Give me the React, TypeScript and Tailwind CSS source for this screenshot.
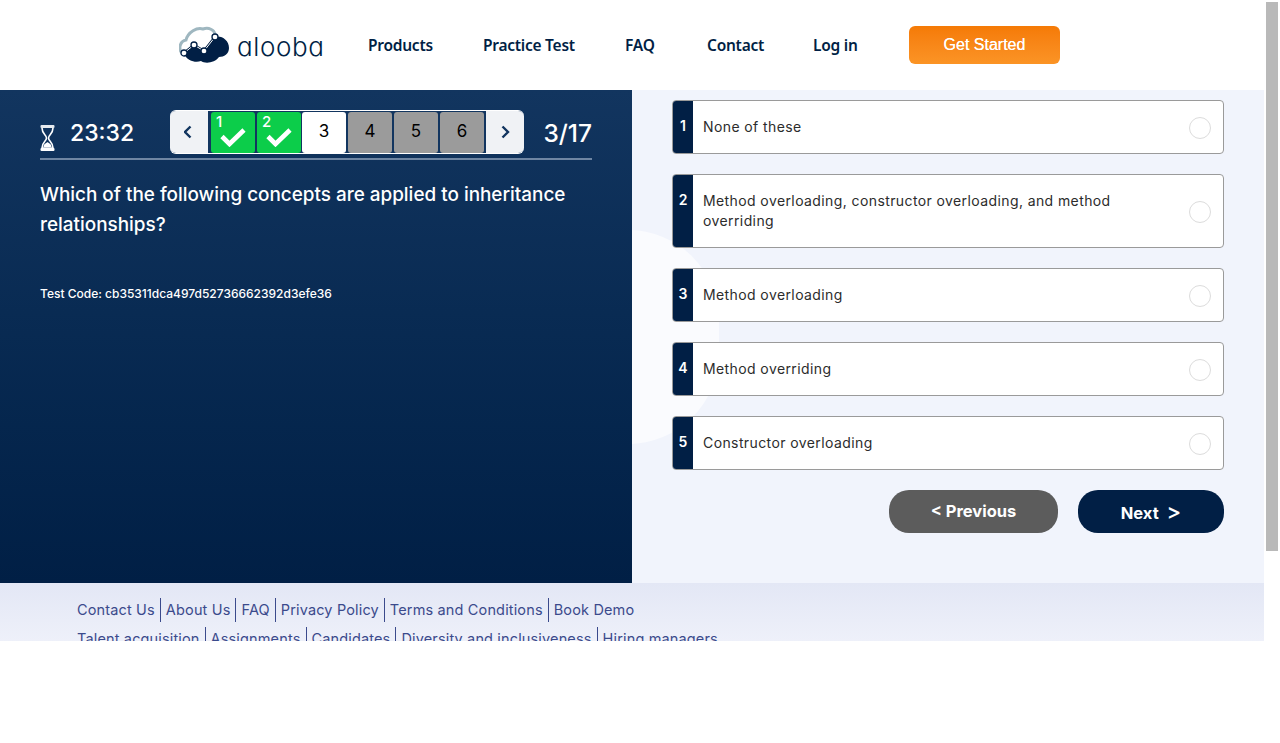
import React from "react";

const poppins = { fontFamily: "Inter, 'Noto Sans', sans-serif" };

function Logo() {
  return (
    <div className="flex items-center gap-[7px]">
      <svg width="51" height="38" viewBox="0 0 51 38" className="block">
        <path d="M3 27 C-1 23 1 15 7 14 C9 6 18 1 24 3 C30 1 35 4 36 8" fill="none" stroke="#9fb7c0" strokeWidth="3" />
        <path d="M5 27 L15 19 L25 25 L36 11 C42 9 50 14 50 22 C50 28 45 31 40 31 C36 37 26 38 22 35 C17 37 8 35 6 29 Z" fill="#011f45" />
        <path d="M5 27 L15 19 L25 25 L36 11" fill="none" stroke="#011f45" strokeWidth="2.6" />
        <path d="M5 27 L15 19 L25 25 L36 11" fill="none" stroke="#fff" strokeWidth="1" />
        <circle cx="5" cy="27" r="3" fill="#fff" stroke="#011f45" strokeWidth="1.3" />
        <circle cx="15" cy="19" r="3" fill="#fff" stroke="#011f45" strokeWidth="1.3" />
        <circle cx="25" cy="25" r="3" fill="#fff" stroke="#011f45" strokeWidth="1.3" />
        <circle cx="36" cy="11" r="3" fill="#fff" stroke="#011f45" strokeWidth="1.3" />
      </svg>
      <span className="pt-[4px] text-[26px] font-light leading-none tracking-[0.6px] text-[#011f45] [font-feature-settings:'cv11']" style={poppins}>alooba</span>
    </div>
  );
}

function Header() {
  const items = [
    ["Products", "w-[115px]"],
    ["Practice Test", "w-[142px]"],
    ["FAQ", "w-[82px]"],
    ["Contact", "w-[106px]"],
    ["Log in", "w-[96px]"],
  ];
  return (
    <header className="flex h-[90px] items-center bg-white pl-[179px]">
      <div className="w-[189px]"><Logo /></div>
      <nav className="flex items-center pt-[1px]">
        {items.map(([t, w]) => (
          <a key={t} className={`${w} text-[15.5px] font-semibold tracking-[-0.25px] text-[#011f45]`} style={{ fontFamily: "'Noto Sans', sans-serif" }}>{t}</a>
        ))}
      </nav>
      <button className="flex h-[38px] w-[151px] items-center justify-center rounded-[6px] bg-gradient-to-b from-[#f57a05] to-[#fb9425] text-[16px] text-white [text-shadow:0_0_0.5px_#fff]" style={{ fontFamily: "'Liberation Sans', sans-serif" }}>Get Started</button>
    </header>
  );
}

function Check() {
  return (
    <svg width="26" height="20" viewBox="0 0 26 20" className="absolute left-[9px] top-[15px]">
      <path d="M2 9.5 L9.5 17 L24 3" fill="none" stroke="#fff" strokeWidth="4.6" />
    </svg>
  );
}

function Chevron({ dir }: { dir: "l" | "r" }) {
  return (
    <svg width="10" height="14" viewBox="0 0 10 14">
      <path d={dir === "l" ? "M6.5 1.5 L1 7 L6.5 12.5" : "M2.5 1.5 L8 7 L2.5 12.5"} fill="none" stroke="#12355f" strokeWidth="2.4" />
    </svg>
  );
}

function Pager() {
  return (
    <div className="flex h-[44px] w-[354px] shrink-0 overflow-hidden rounded-[6px] border-y border-white bg-[#12355f]">
      <div className="flex w-[38px] items-center justify-center bg-[#f0f2f5]"><Chevron dir="l" /></div>
      <div className="flex flex-1 items-center gap-[2px] pl-[3px]">
        {[1, 2].map((n) => (
          <div key={n} className="relative h-[41px] w-[44px] rounded-[3px] bg-[#0ccd4a]">
            <span className="absolute left-[5px] top-0 text-[15px] font-medium leading-[20px] text-white" style={poppins}>{n}</span>
            <Check />
          </div>
        ))}
        <div className="-ml-[1px] flex h-[41px] w-[44px] items-center justify-center rounded-[3px] bg-white text-[17px] text-black" style={poppins}>3</div>
        {[4, 5, 6].map((n) => (
          <div key={n} className="flex h-[41px] w-[44px] items-center justify-center rounded-[3px] bg-[#9b9b9b] text-[17px] text-black" style={poppins}>{n}</div>
        ))}
      </div>
      <div className="flex w-[38px] items-center justify-center bg-[#f0f2f5]"><Chevron dir="r" /></div>
    </div>
  );
}

function Hourglass() {
  return (
    <svg width="15" height="28" viewBox="0 0 15 28" className="mt-[14px]">
      <rect x="0.5" y="1" width="14" height="3" rx="1" fill="#e6eaef" />
      <rect x="0.5" y="24" width="14" height="3" rx="1" fill="#fff" />
      <path d="M2 4 C2 10 6.5 11 6.5 14 C6.5 17 2 18 2 24 H13 C13 18 8.5 17 8.5 14 C8.5 11 13 10 13 4" fill="none" stroke="#fff" strokeWidth="1.6" />
      <path d="M3.5 23 C3.5 20 6.5 19 7.5 18 C8.5 19 11.5 20 11.5 23 Z" fill="#fff" />
    </svg>
  );
}

function LeftPanel() {
  return (
    <section className="h-[493px] w-[632px] shrink-0 bg-gradient-to-b from-[#12355f] to-[#011f45] px-[40px] pt-[20px] text-white">
      <div className="flex h-[50px] items-start border-b-2 border-[#6f86a3]">
        <Hourglass />
        <span className="ml-[15px] mr-[36px] w-[64px] pt-[7px] text-[23px] font-[450] leading-[32px]" style={poppins}>23:32</span>
        <Pager />
        <span className="ml-auto pt-[7px] text-[24.5px] font-[450] leading-[32px]" style={poppins}>3/17</span>
      </div>
      <p className="mt-[20px] text-[18.9px] font-medium leading-[30px]" style={poppins}>Which of the following concepts are applied to inheritance relationships?</p>
      <p className="mt-[45px] text-[12px] font-medium leading-[18px]" style={poppins}>Test Code: cb35311dca497d52736662392d3efe36</p>
    </section>
  );
}

const answers = [
  "None of these",
  "Method overloading, constructor overloading, and method overriding",
  "Method overloading",
  "Method overriding",
  "Constructor overloading",
];

function Answer({ n, text }: { n: number; text: string }) {
  return (
    <div className="flex min-h-[54px] overflow-hidden rounded-[4px] border border-[#9a9a9a] bg-white">
      <div className="flex w-[20px] shrink-0 justify-center bg-[#011f45] pt-[15px] text-[14px] font-semibold leading-[20px] text-white" style={poppins}>{n}</div>
      <div className="flex flex-1 items-center pl-[10px] pr-[12px]">
        <p className="w-[455px] py-[16px] text-[14px] leading-[20px] tracking-[0.4px] text-[#2c2c2c]" style={poppins}>{text}</p>
        <span className="ml-auto mt-[2px] h-[22px] w-[22px] rounded-full border border-[#dcdcdc] bg-white" />
      </div>
    </div>
  );
}

function RightPanel() {
  return (
    <section className="relative h-[493px] flex-1 overflow-hidden bg-[#f1f4fc] pl-[40px] pr-[40px] pt-[10px]">
      <div className="absolute left-[-95px] top-[140px] h-[214px] w-[182px] rounded-full bg-[#fafbfe]" />
      <div className="relative flex flex-col gap-[20px]">
        {answers.map((a, i) => <Answer key={i} n={i + 1} text={a} />)}
      </div>
      <div className="relative mt-[20px] flex justify-end gap-[20px]">
        <button className="h-[43px] w-[169px] rounded-[20px] bg-[#5c5c5c] text-[16.5px] font-bold text-white" style={poppins}>&lt; Previous</button>
        <button className="h-[43px] w-[146px] rounded-[20px] bg-[#011f45] text-[16.5px] font-bold text-white" style={poppins}>Next&nbsp; <span className="text-[22px] font-medium">&gt;</span></button>
      </div>
    </section>
  );
}

function FooterRow({ items }: { items: string[] }) {
  return (
    <div className="flex h-[24px] items-center">
      {items.map((t, i) => (
        <a key={t} className={`flex h-[24px] items-center pr-[5px] text-[14.5px] tracking-[0.15px] text-[#3b4a8c] ${i ? "pl-[5px]" : ""} ${i < items.length - 1 ? "border-r border-[#3b4a8c]" : ""}`} style={poppins}>{t}</a>
      ))}
    </div>
  );
}

function Footer() {
  return (
    <footer className="h-[100px] bg-gradient-to-b from-[#e3e7f5] to-[#f6f7fd] pl-[77px] pt-[15px]">
      <div className="flex flex-col gap-[5px]">
        <FooterRow items={["Contact Us", "About Us", "FAQ", "Privacy Policy", "Terms and Conditions", "Book Demo"]} />
        <FooterRow items={["Talent acquisition", "Assignments", "Candidates", "Diversity and inclusiveness", "Hiring managers"]} />
      </div>
    </footer>
  );
}

export default function App() {
  return (
    <div className="flex h-[743px] w-full overflow-hidden bg-white">
      <div className="h-[641px] w-[1264px] shrink-0 overflow-hidden">
        <Header />
        <main className="flex">
          <LeftPanel />
          <RightPanel />
        </main>
        <Footer />
      </div>
      <div className="w-[16px] shrink-0 px-[2px] pt-[2px]">
        <div className="h-[549px] bg-[#b9b9b9]" />
      </div>
    </div>
  );
}
